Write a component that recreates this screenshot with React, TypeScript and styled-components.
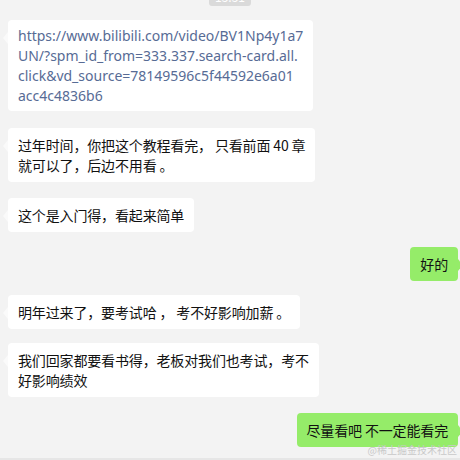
import React from "react";
import styled, { createGlobalStyle } from "styled-components";

const GlobalStyle = createGlobalStyle`
  html, body {
    margin: 0;
    padding: 0;
    background: #f3f3f3;
  }
`;

const ChatPane = styled.div`
  position: relative;
  width: 460px;
  height: 460px;
  box-sizing: border-box;
  overflow: hidden;
  background: #f3f3f3;
  border-bottom: 2px solid #e6e6e6;
  display: flex;
  flex-direction: column;
  font-family: "Noto Sans CJK SC", "Noto Sans", sans-serif;
`;

const TimeRow = styled.div`
  display: flex;
  justify-content: center;
  margin-top: -12px;
`;

const TimePill = styled.span`
  width: 42px;
  height: 18px;
  border-radius: 3px;
  background: #dadada;
  color: #fff;
  font-size: 12px;
  line-height: 18px;
  text-align: center;
`;

const Row = styled.div<{ $mine?: boolean; $top: number }>`
  display: flex;
  justify-content: ${(p) => (p.$mine ? "flex-end" : "flex-start")};
  margin-top: ${(p) => p.$top}px;
  padding: 0 2px 0 8px;
`;

const Bubble = styled.div<{ $mine?: boolean; $link?: boolean }>`
  position: relative;
  box-sizing: border-box;
  padding: ${(p) => (p.$link ? "6px 10px 5px" : "7px 10px 7px")};
  border-radius: 4px;
  background: ${(p) => (p.$mine ? "#95ec69" : "#ffffff")};
  color: ${(p) => (p.$link ? "#576b95" : "#111111")};
  font-family: ${(p) =>
    p.$link
      ? '"Noto Sans", "Open Sans", sans-serif'
      : '"Noto Sans CJK SC", sans-serif'};
  font-size: 14px;
  line-height: 20px;
  white-space: nowrap;
  letter-spacing: ${(p) => (p.$link ? "0" : "-0.15px")};

  &::before {
    content: "";
    position: absolute;
    top: 12px;
    ${(p) => (p.$mine ? "right: -5px;" : "left: -5px;")}
    border-top: 6px solid transparent;
    border-bottom: 6px solid transparent;
    ${(p) =>
      p.$mine
        ? "border-left: 5px solid #95ec69;"
        : "border-right: 5px solid #fafafa;"}
  }
`;

const Watermark = styled.span`
  position: absolute;
  right: 3px;
  bottom: 3px;
  font-size: 10px;
  line-height: 11px;
  color: #c9c9c9;
  font-family: "Noto Sans CJK SC", sans-serif;
`;

const App = (): React.ReactElement => (
  <>
    <GlobalStyle />
    <ChatPane>
      <TimeRow>
        <TimePill>15:51</TimePill>
      </TimeRow>
      <Row $top={14}>
        <Bubble $link>
          https://www.bilibili.com/video/BV1Np4y1a7
          <br />
          UN/?spm_id_from=333.337.search-card.all.
          <br />
          click&amp;vd_source=78149596c5f44592e6a01
          <br />
          acc4c4836b6
        </Bubble>
      </Row>
      <Row $top={17}>
        <Bubble>
          过年时间，你把这个教程看完， 只看前面 40 章
          <br />
          就可以了，后边不用看 。
        </Bubble>
      </Row>
      <Row $top={16}>
        <Bubble>这个是入门得，看起来简单</Bubble>
      </Row>
      <Row $mine $top={15}>
        <Bubble $mine>好的</Bubble>
      </Row>
      <Row $top={14}>
        <Bubble>明年过来了，要考试哈 ， 考不好影响加薪 。</Bubble>
      </Row>
      <Row $top={14}>
        <Bubble>
          我们回家都要看书得，老板对我们也考试，考不
          <br />
          好影响绩效
        </Bubble>
      </Row>
      <Row $mine $top={16}>
        <Bubble $mine>尽量看吧 不一定能看完</Bubble>
      </Row>
      <Watermark>@稀土掘金技术社区</Watermark>
    </ChatPane>
  </>
);

export default App;
